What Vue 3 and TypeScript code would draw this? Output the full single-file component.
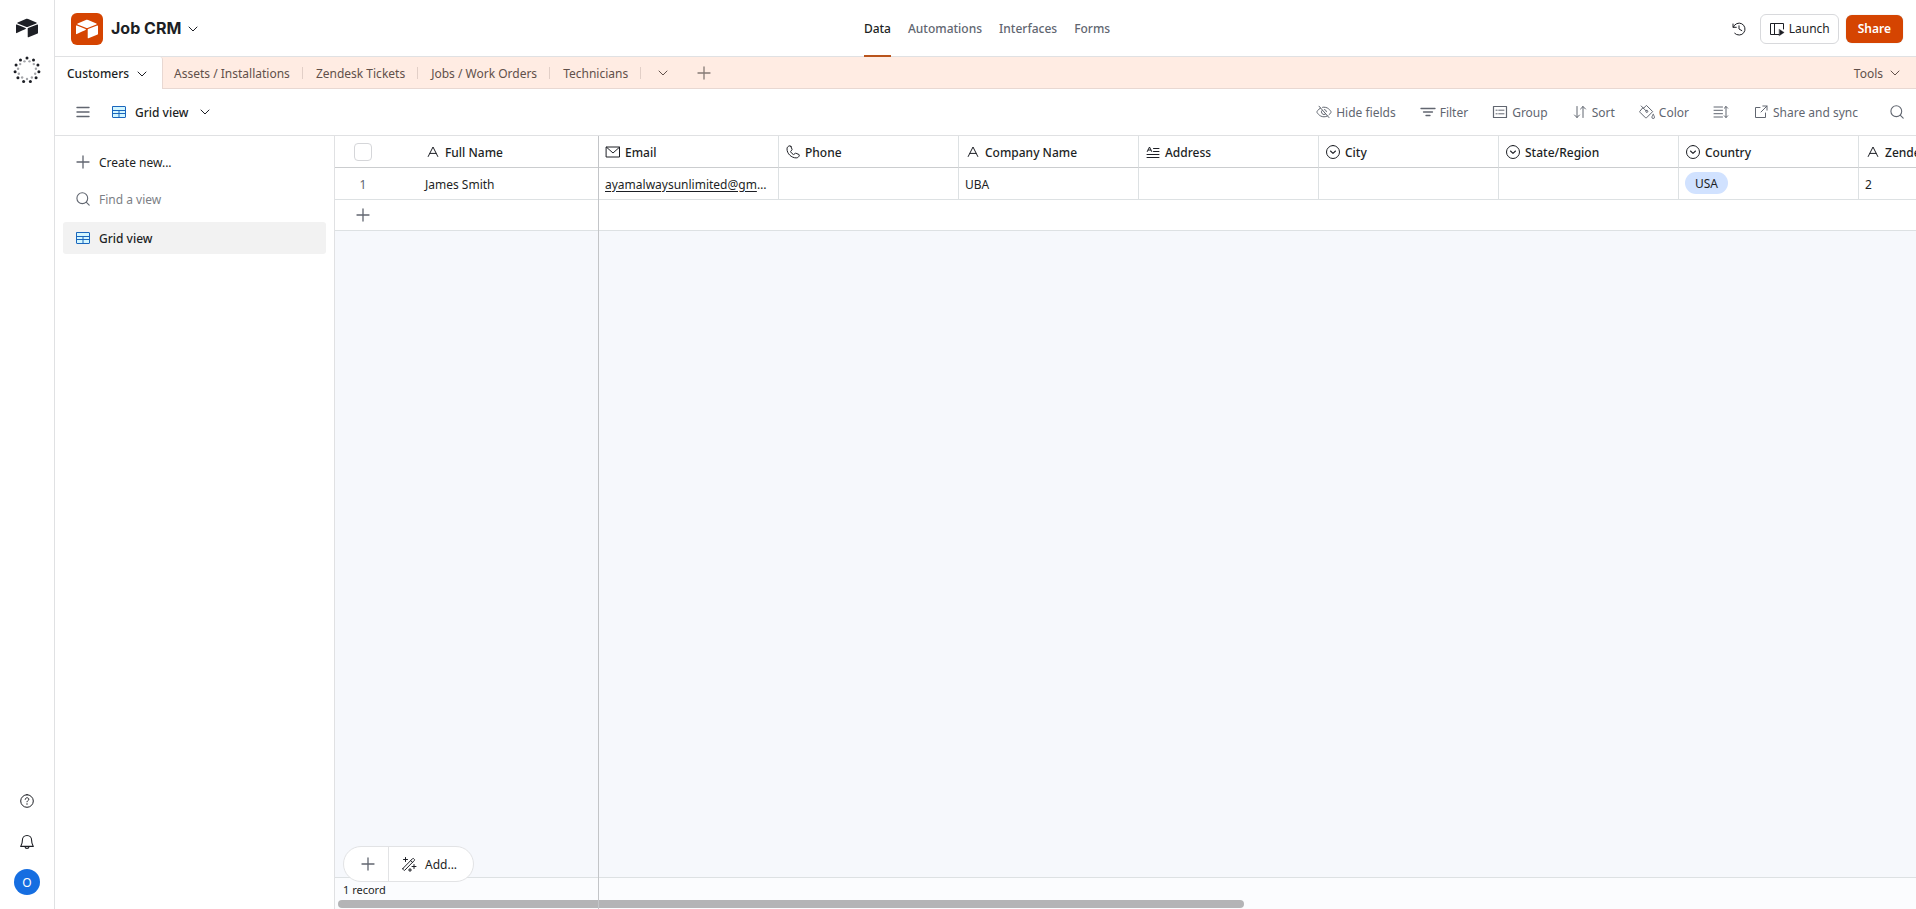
<script setup lang="ts">
import { h, type FunctionalComponent } from 'vue'

interface Shape {
  d: string
  fill?: string
  width?: number
}

interface Column {
  key: string
  label: string
  icon: string
}

const icons: Record<string, Shape[]> = {
  chevron: [{ d: 'M4 6 8 10l4-4' }],
  plus: [{ d: 'M8 2v12M2 8h12', width: 1.3 }],
  menu: [{ d: 'M2 3.5h12M2 8h12M2 12.5h12', width: 1.4 }],
  grid: [
    { d: 'M1.5 2.5h13v11h-13z', fill: '#d3f6ff', width: 0 },
    { d: 'M2 2.5h12q.5 0 .5.5v10q0 .5-.5.5H2q-.5 0-.5-.5V3q0-.5.5-.5zM1.5 6.5h13M1.5 9.5h13M8 6.5v7' },
  ],
  search: [{ d: 'M7.3 1.8a5.4 5.4 0 1 1 0 10.8a5.4 5.4 0 0 1 0-10.8zM11.2 11.2l3 3', width: 1.1 }],
  eye: [
    { d: 'M3 2.2l10 11.4' },
    { d: 'M4.6 4C2 5.3.8 8 .8 8S3 12.8 8 12.8c1.3 0 2.4-.3 3.3-.8M13 10.8C14.6 9.5 15.2 8 15.2 8S13 3.2 8 3.2c-.5 0-1 0-1.4.1' },
    { d: 'M6.3 6.1a2.5 2.5 0 0 0 3.4 3.8M8.5 5.5a2.5 2.5 0 0 1 2 2.2' },
  ],
  filter: [{ d: 'M1 4.5h14M3.5 8h9M6 11.5h4', width: 1.3 }],
  group: [
    { d: 'M1.5 2.5h13v11h-13z', width: 1.2 },
    { d: 'M4 6.2h1.2M6.7 6.2H12M4 9.8h1.2M6.7 9.8H12' },
  ],
  sort: [{ d: 'M5 2.5v11M2.5 11 5 13.5 7.5 11M11 13.5v-11M8.5 5 11 2.5 13.5 5' }],
  bucket: [
    { d: 'M2.2 2 7 6.8M3.9 3.7.9 7.2q-.5.5 0 1l5.6 5.6q.5.5 1 0l6.2-6.2-6.3-6.2-3.3 3.3' },
    { d: 'M7.8 6.4a1 1 0 1 1 0 2a1 1 0 0 1 0-2z' },
    { d: 'M14.2 10.5s1.3 1.8 1.3 2.7a1.3 1.3 0 0 1-2.6 0c0-.9 1.3-2.7 1.3-2.7z' },
  ],
  rowHeight: [
    { d: 'M1 3h8.5M1 6.3h8.5M1 9.7h8.5M1 13h8.5' },
    { d: 'M13 2.5v11M11.3 4.2 13 2.5l1.7 1.7M11.3 11.8l1.7 1.7 1.7-1.7' },
  ],
  external: [{ d: 'M7 3.5H2.5v10h10V9M9.8 2h4.2v4.2M14 2 8 8' }],
  history: [
    { d: 'M2 3v3.3h3.3M2.3 6.2A6 6 0 1 1 3.7 12.3' },
    { d: 'M8 4.8V8l2.8 1.6' },
  ],
  launch: [
    { d: 'M10 13.5H1.5v-11h13V8M5.5 2.5v11' },
    { d: 'M10.3 8.3l4.9 3.1-4.9 3.4z', fill: 'currentColor', width: 0.3 },
  ],
  text: [{ d: 'M3.2 12.5 8 3l4.8 9.5M4.9 9.4h6.2' }],
  mail: [{ d: 'M1.5 3h13v10h-13zM1.5 3.2 8 9l6.5-5.8' }],
  phone: [
    {
      d: 'M5.8 2.3 7 5.2q.2.5-.2.9L5.7 7.3q-.2.3 0 .6c.6 1.1 1.5 2 2.6 2.5q.3.2.6 0l1.3-1q.4-.3.9-.1l2.8 1.2q.5.2.4.7c-.2 1.6-1.5 2.7-3.1 2.7C6.3 13.9 2 9.6 2 4.9c0-1.6 1.1-2.9 2.9-3.1q.6-.1.9.5z',
    },
  ],
  longText: [
    { d: 'M2.3 7.5 4.5 3l2.2 4.5M3.2 6h2.6' },
    { d: 'M8.5 4.5H14M8.5 7.5H14M2 10.5h12M2 13.5h12' },
  ],
  select: [
    { d: 'M8 1.5a6.5 6.5 0 1 1 0 13a6.5 6.5 0 0 1 0-13z' },
    { d: 'M5.5 7 8 9.3 10.5 7', width: 1.1 },
  ],
  help: [
    { d: 'M8 1.7a6.3 6.3 0 1 1 0 12.6a6.3 6.3 0 0 1 0-12.6z' },
    { d: 'M6.2 6.3c0-2.1 3.6-2.1 3.6 0 0 1.3-1.8 1.2-1.8 2.5' },
    { d: 'M8 10.3a.7.7 0 1 1 0 1.4a.7.7 0 0 1 0-1.4z', fill: 'currentColor', width: 0 },
  ],
  bell: [
    { d: 'M8 1.5c2.8 0 4.6 2 4.6 4.7 0 3.6.9 4.8 1.7 6.2H1.7c.8-1.4 1.7-2.6 1.7-6.2C3.4 3.5 5.2 1.5 8 1.5z', width: 1.1 },
    { d: 'M6 12.6c.2 2.3 3.8 2.3 4 0', width: 1.1 },
  ],
  wand: [
    { d: 'M2 12.4 11.6 2.6q.5-.5 1 0l.8.8q.5.5 0 1L3.8 14.2q-.5.5-1 0l-.8-.8q-.5-.5 0-1zM9.7 4.6l1.8 1.8' },
    { d: 'M4.5 1.5v4M2.5 3.5h4M13 8.5v4M11 10.5h4M9 12.5v3M7.5 14h3' },
  ],
}

const Icon: FunctionalComponent<{ name: string }> = (props) =>
  h(
    'svg',
    {
      class: 'icon',
      viewBox: '0 0 16 16',
      fill: 'none',
      stroke: 'currentColor',
      'stroke-linecap': 'round',
      'stroke-linejoin': 'round',
      'aria-hidden': 'true',
    },
    icons[props.name].map((shape) =>
      h('path', { d: shape.d, fill: shape.fill ?? 'none', 'stroke-width': shape.width ?? 1 }),
    ),
  )
Icon.props = ['name']

const Logo: FunctionalComponent = () =>
  h('svg', { class: 'logo', viewBox: '0 0 24 24', fill: 'currentColor', 'aria-hidden': 'true' }, [
    h('path', {
      d: 'M11.992 1.966c-.434 0-.87.086-1.28.257L1.779 5.917c-.503.208-.49.908.012 1.116l8.982 3.558a3.266 3.266 0 0 0 2.454 0l8.982-3.558c.503-.196.503-.908.012-1.116l-8.957-3.694a3.255 3.255 0 0 0-1.272-.257zM23.4 8.056a.589.589 0 0 0-.222.045l-10.012 3.877a.612.612 0 0 0-.38.564v8.896a.6.6 0 0 0 .821.552L23.62 18.1a.583.583 0 0 0 .38-.551V8.653a.6.6 0 0 0-.6-.596zM.676 8.095a.644.644 0 0 0-.48.19C.086 8.396 0 8.53 0 8.69v8.355c0 .442.515.737.908.54l6.27-3.006.307-.147 2.969-1.436c.466-.22.43-.908-.061-1.092L.883 8.138a.57.57 0 0 0-.207-.044z',
    }),
  ])

const DOTS = 11
const ring = (radius: number, shift: number) =>
  Array.from({ length: DOTS }, (_, i) => {
    const angle = ((i + shift) / DOTS) * Math.PI * 2
    return { x: 14 + radius * Math.sin(angle), y: 14 - radius * Math.cos(angle) }
  })
const outerDots = ring(12, 0)
const innerDots = ring(9, 0.5)

const sections = ['Data', 'Automations', 'Interfaces', 'Forms']
const tables = ['Assets / Installations', 'Zendesk Tickets', 'Jobs / Work Orders', 'Technicians']
const tools = [
  { icon: 'eye', label: 'Hide fields' },
  { icon: 'filter', label: 'Filter' },
  { icon: 'group', label: 'Group' },
  { icon: 'sort', label: 'Sort' },
  { icon: 'bucket', label: 'Color' },
  { icon: 'rowHeight', label: '' },
  { icon: 'external', label: 'Share and sync' },
]
const columns: Column[] = [
  { key: 'name', label: 'Full Name', icon: 'text' },
  { key: 'email', label: 'Email', icon: 'mail' },
  { key: 'phone', label: 'Phone', icon: 'phone' },
  { key: 'company', label: 'Company Name', icon: 'text' },
  { key: 'address', label: 'Address', icon: 'longText' },
  { key: 'city', label: 'City', icon: 'select' },
  { key: 'state', label: 'State/Region', icon: 'select' },
  { key: 'country', label: 'Country', icon: 'select' },
  { key: 'zendesk', label: 'Zendesk ID', icon: 'text' },
]
const records: Record<string, string>[] = [
  { name: 'James Smith', email: 'ayamalwaysunlimited@gmail.com', company: 'UBA', country: 'USA', zendesk: '2' },
]
</script>

<template>
  <div class="app">
    <nav class="rail" aria-label="Workspace">
      <a class="rail-home" href="#" aria-label="Home"><Logo /></a>
      <button class="rail-button" type="button" aria-label="Assistant">
        <svg class="dots" viewBox="0 0 28 28" aria-hidden="true">
          <circle v-for="(dot, i) in outerDots" :key="'o' + i" :cx="dot.x" :cy="dot.y" r="1.5" fill="#1d1f25" />
          <circle v-for="(dot, i) in innerDots" :key="'i' + i" :cx="dot.x" :cy="dot.y" r="1.2" fill="#a3a4a8" />
        </svg>
      </button>
      <div class="rail-bottom">
        <button class="rail-button" type="button" aria-label="Help"><Icon name="help" /></button>
        <button class="rail-button" type="button" aria-label="Notifications"><Icon name="bell" /></button>
        <button class="avatar" type="button" aria-label="Account">O</button>
      </div>
    </nav>

    <div class="main">
      <header class="header">
        <div class="brand">
          <span class="brand-logo"><Logo /></span>
          <button class="brand-name" type="button">Job CRM <Icon name="chevron" /></button>
        </div>
        <nav class="sections" aria-label="Sections">
          <a v-for="(section, i) in sections" :key="section" href="#" :class="{ active: i === 0 }">{{ section }}</a>
        </nav>
        <div class="header-actions">
          <button class="history" type="button" aria-label="Base history"><Icon name="history" /></button>
          <button class="launch" type="button"><Icon name="launch" />Launch</button>
          <button class="share" type="button">Share</button>
        </div>
      </header>

      <div class="tabs">
        <button class="tab current" type="button">Customers <Icon name="chevron" /></button>
        <button v-for="name in tables" :key="name" class="tab" type="button">{{ name }}</button>
        <button class="tab-icon" type="button" aria-label="All tables"><Icon name="chevron" /></button>
        <button class="tab-icon" type="button" aria-label="Add table"><Icon name="plus" /></button>
        <button class="tools" type="button">Tools <Icon name="chevron" /></button>
      </div>

      <div class="toolbar">
        <button class="menu" type="button" aria-label="Toggle sidebar"><Icon name="menu" /></button>
        <button class="view-name" type="button">
          <Icon class="blue" name="grid" /><span>Grid view</span><Icon name="chevron" />
        </button>
        <div class="view-tools">
          <button v-for="tool in tools" :key="tool.icon" type="button" :aria-label="tool.label || 'Row height'">
            <Icon :name="tool.icon" /><span v-if="tool.label">{{ tool.label }}</span>
          </button>
          <button class="find" type="button" aria-label="Search records"><Icon name="search" /></button>
        </div>
      </div>

      <div class="workspace">
        <aside class="sidebar">
          <button class="side-row" type="button"><Icon class="muted" name="plus" />Create new...</button>
          <label class="side-row find-view">
            <Icon class="muted" name="search" />
            <input type="text" placeholder="Find a view" aria-label="Find a view" />
          </label>
          <a class="side-row selected" href="#"><Icon class="blue" name="grid" />Grid view</a>
        </aside>

        <main class="grid">
          <div class="sheet">
            <table>
              <colgroup>
                <col class="index-col" />
                <col v-for="column in columns" :key="column.key" class="field-col" />
              </colgroup>
              <thead>
                <tr>
                  <th class="index"><input type="checkbox" aria-label="Select all records" /></th>
                  <th v-for="column in columns" :key="column.key" scope="col">
                    <div class="field"><Icon :name="column.icon" />{{ column.label }}</div>
                  </th>
                </tr>
              </thead>
              <tbody>
                <tr v-for="(record, i) in records" :key="i">
                  <td class="index">{{ i + 1 }}</td>
                  <td v-for="column in columns" :key="column.key" :class="{ tagged: column.key === 'country' }">
                    <a v-if="column.key === 'email'" :href="'mailto:' + record.email">{{ record.email }}</a>
                    <span v-else-if="column.key === 'country'" class="tag">{{ record.country }}</span>
                    <template v-else>{{ record[column.key] }}</template>
                  </td>
                </tr>
                <tr class="add-row">
                  <td class="index"><button type="button" aria-label="Add record"><Icon name="plus" /></button></td>
                  <td :colspan="columns.length"></td>
                </tr>
              </tbody>
            </table>
          </div>
          <footer class="summary">
            <div class="adder">
              <button class="adder-plus" type="button" aria-label="Add record"><Icon class="muted" name="plus" /></button>
              <button class="adder-more" type="button"><Icon name="wand" />Add...</button>
            </div>
            <span class="count">1 record</span>
            <div class="scroll-thumb"></div>
          </footer>
        </main>
      </div>
    </div>
  </div>
</template>

<style>
body {
  margin: 0;
}
</style>

<style scoped>
.app {
  display: flex;
  height: 100vh;
  overflow: hidden;
  background: #fff;
  color: #1d1f25;
  font-family: 'Noto Sans', 'Open Sans', sans-serif;
  font-size: 12px;
  line-height: 19px;
}

button {
  display: flex;
  align-items: center;
  margin: 0;
  padding: 0;
  border: 0;
  background: none;
  color: inherit;
  font: inherit;
  white-space: nowrap;
  cursor: pointer;
}

a {
  color: inherit;
  text-decoration: none;
}

.icon {
  display: block;
  flex: none;
  width: 16px;
  height: 16px;
}

.logo {
  display: block;
  width: 22px;
  height: 22px;
}

.blue {
  color: #1a66bd;
}

.muted {
  color: #616670;
}

.rail {
  display: flex;
  flex: none;
  flex-direction: column;
  align-items: center;
  width: 54px;
  border-right: 1px solid #e0e1e3;
}

.rail-home {
  margin-top: 17px;
}

.rail-button {
  justify-content: center;
  width: 28px;
  height: 28px;
}

.rail-home + .rail-button {
  margin-top: 17px;
}

.dots {
  width: 28px;
  height: 28px;
}

.rail-bottom {
  display: flex;
  flex-direction: column;
  gap: 13px;
  margin-top: auto;
  padding-bottom: 14px;
}

.avatar {
  justify-content: center;
  width: 26px;
  height: 26px;
  margin: 0 1px;
  border-radius: 50%;
  background: #166ee1;
  color: #fff;
}

.main {
  display: flex;
  flex: 1;
  flex-direction: column;
  min-width: 0;
}

.header {
  display: grid;
  flex: none;
  grid-template-columns: 1fr auto 1fr;
  align-items: center;
  height: 56px;
  padding: 0 13px 0 16px;
  border-bottom: 1px solid #e0e1e3;
}

.brand {
  display: flex;
  align-items: center;
  gap: 8px;
}

.brand-logo {
  padding: 5px;
  border-radius: 6px;
  background: #d54401;
  color: #fff;
}

.brand-name {
  gap: 4px;
  font-family: Inter, sans-serif;
  font-size: 16px;
  font-weight: 700;
  line-height: 23px;
}

.sections {
  display: flex;
  gap: 17px;
  height: 57px;
  align-self: start;
  color: #616670;
  font-weight: 500;
}

.sections a {
  box-sizing: border-box;
  padding-top: 19px;
  border-bottom: 2px solid transparent;
}

.sections .active {
  border-color: #b9541c;
  color: #1d1f25;
}

.header-actions {
  display: flex;
  align-items: center;
  justify-content: flex-end;
}

.history {
  margin-right: 13px;
}

.launch {
  gap: 4px;
  height: 30px;
  margin-right: 7px;
  padding: 0 8px;
  border: 1px solid #d8d9dc;
  border-radius: 6px;
}

.share {
  height: 28px;
  padding: 0 12px;
  border-radius: 6px;
  background: #d54401;
  box-shadow: 0 0 1px rgba(0, 0, 0, 0.32);
  color: #fff;
  font-weight: 600;
}

.tabs {
  display: flex;
  flex: none;
  align-items: center;
  height: 30px;
  padding-top: 1px;
  border-bottom: 1px solid #e8d8d2;
  background: #ffece3;
  color: #61504a;
}

.tab {
  padding: 0 14px 0 12px;
}

.tab::after {
  width: 1px;
  height: 12px;
  margin: 0 -13px 0 12px;
  background: #e2cfc7;
  content: '';
}

.current + .tab {
  padding-left: 11px;
}

.tab.current {
  gap: 5px;
  align-self: stretch;
  margin: -1px 0;
  padding: 1px 12px 0;
  border-right: 1px solid #e8d8d2;
  border-radius: 0 3px 0 0;
  background: #fff;
  color: #1d1f25;
  font-weight: 500;
}

.tab.current::after {
  content: none;
}

.tab-icon {
  margin-left: 13px;
}

.tab-icon + .tab-icon {
  margin-left: 25px;
  color: #857a76;
}

.tools {
  gap: 4px;
  margin-left: auto;
  padding-right: 13px;
}

.toolbar {
  display: flex;
  flex: none;
  align-items: center;
  height: 46px;
  padding: 0 11px 0 20px;
  border-bottom: 1px solid #e0e1e3;
}

.menu {
  color: #616670;
}

.view-name {
  gap: 8px;
  margin-left: 20px;
  font-weight: 500;
}

.view-tools {
  display: flex;
  gap: 24px;
  margin-left: auto;
  color: #616670;
}

.view-tools button {
  gap: 4px;
}

.view-tools .find {
  margin-left: 7px;
}

.workspace {
  display: flex;
  flex: 1;
  min-height: 0;
}

.sidebar {
  display: flex;
  flex: none;
  flex-direction: column;
  gap: 6px;
  box-sizing: border-box;
  width: 280px;
  padding: 10px 8px;
  border-right: 1px solid #e0e1e3;
}

.side-row {
  display: flex;
  align-items: center;
  gap: 8px;
  box-sizing: border-box;
  height: 32px;
  padding: 0 12px;
}

.find-view {
  padding-bottom: 2px;
}

.find-view input {
  min-width: 0;
  flex: 1;
  padding: 0;
  border: 0;
  outline: 0;
  background: none;
  color: inherit;
  font: inherit;
}

.find-view input::placeholder {
  color: #7c7f86;
  opacity: 1;
}

.selected {
  border-radius: 3px;
  background: #f2f2f2;
  font-weight: 500;
}

.grid {
  position: relative;
  display: flex;
  flex: 1;
  flex-direction: column;
  min-width: 0;
  background: #f6f8fc;
}

.grid::after {
  position: absolute;
  top: 0;
  bottom: 0;
  left: 263px;
  width: 1px;
  background: #c3c5c8;
  content: '';
}

.sheet {
  flex: 1;
  overflow: hidden;
}

table {
  width: 1704px;
  border-spacing: 0;
  background: #fff;
  table-layout: fixed;
}

.index-col {
  width: 84px;
}

.field-col {
  width: 180px;
}

th,
td {
  box-sizing: border-box;
  height: 32px;
  padding: 1px 6px 0;
  overflow: hidden;
  border-right: 1px solid #dde1e3;
  border-bottom: 1px solid #dde1e3;
  text-align: left;
  text-overflow: ellipsis;
  white-space: nowrap;
}

th {
  border-bottom-color: #cbcdcf;
  font-weight: 500;
}

td a {
  text-decoration: underline;
  text-underline-offset: 2px;
}

.field {
  display: flex;
  align-items: center;
  gap: 4px;
}

.index {
  padding: 1px 28px 0 0;
  border-right: 0;
  color: #616670;
  text-align: center;
}

.index input {
  display: block;
  width: 18px;
  height: 18px;
  margin: 0 auto;
  border: 1px solid #d5d6d9;
  border-radius: 4px;
  appearance: none;
  background: #fff;
}

.index button {
  margin: 0 auto;
}

.add-row td {
  height: 31px;
  padding-top: 0;
}

.tagged {
  padding: 0 6px 2px;
}

.tag {
  display: inline-block;
  padding: 2px 10px 1px;
  border-radius: 11px;
  background: #d1e2ff;
  vertical-align: middle;
}

.summary {
  position: relative;
  display: flex;
  flex: none;
  flex-direction: column;
  justify-content: space-between;
  height: 31px;
  border-top: 1px solid #dde1e3;
  background: #fbfcfe;
}

.count {
  padding: 4px 0 0 8px;
  font-size: 11px;
  line-height: 16px;
}

.scroll-thumb {
  width: 57.3%;
  height: 8px;
  margin: 0 0 1px 3px;
  border-radius: 4px;
  background: #b4b4b6;
}

.adder {
  position: absolute;
  bottom: 27px;
  left: 8px;
  display: flex;
  height: 34px;
  border: 1px solid #e2e3e5;
  border-radius: 18px;
  background: #fff;
}

.adder-plus {
  padding: 0 12px 0 16px;
  border-right: 1px solid #e2e3e5;
}

.adder-more {
  gap: 8px;
  padding: 0 16px 0 12px;
}
</style>
